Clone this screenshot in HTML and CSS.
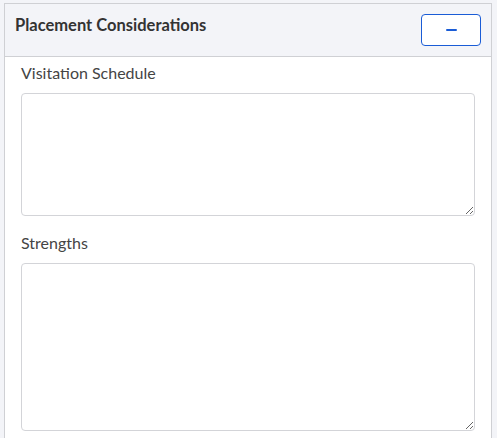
FILE: index.html
```html
<!DOCTYPE html>
<html>
<head>
<meta charset="utf-8">
<link rel="stylesheet" href="styles.css">
</head>
<body>
<div class="card">
  <div class="card-header">
    <h2 class="title">Placement Considerations</h2>
    <button class="toggle" type="button" aria-label="Collapse"><span class="minus"></span></button>
  </div>
  <div class="card-body">
    <div class="field">
      <label class="label" for="visit">Visitation Schedule</label>
      <textarea id="visit" class="input short"></textarea>
    </div>
    <div class="field">
      <label class="label" for="str">Strengths</label>
      <textarea id="str" class="input tall"></textarea>
    </div>
  </div>
</div>
</body>
</html>
```

FILE: styles.css
```css
html, body {
  margin: 0;
  background: #f3f4f8;
}
body {
  padding: 3px 0 0 4px;
  font-family: Lato, "Liberation Sans", sans-serif;
  color: #333;
}
.card {
  width: 488px;
  box-sizing: border-box;
  border: 1px solid #cfd0d4;
  background: #fff;
  height: 460px;
}
.card-header {
  display: flex;
  justify-content: space-between;
  align-items: flex-start;
  padding: 10px 10px 10px 10px;
  height: 53px;
  box-sizing: border-box;
  background: #f3f4f8;
  border-bottom: 1px solid #cfd0d4;
}
.title {
  margin: 2px 0 0 0;
  font-size: 16.5px;
  line-height: 19px;
  font-weight: 700;
  color: #333;
}
.toggle {
  width: 60px;
  height: 32px;
  box-sizing: border-box;
  border: 1px solid #1a5cd6;
  border-radius: 4px;
  background: #fff;
  display: flex;
  align-items: center;
  justify-content: center;
  padding: 0;
  margin: 0;
}
.minus {
  display: block;
  width: 11px;
  height: 2px;
  background: #1a5cd6;
  border-radius: 1px;
}
.card-body {
  padding: 6px 16px 0 16px;
}
.field + .field {
  margin-top: 17px;
}
.label {
  display: block;
  font-size: 16px;
  line-height: 19px;
  color: #444;
  margin-bottom: 11px;
}
.input {
  display: block;
  width: 100%;
  box-sizing: border-box;
  border: 1px solid #d3d4d8;
  border-radius: 4px;
  background: #fff;
  margin: 0;
  padding: 6px 8px;
  font-family: inherit;
}
.short { height: 123px; }
.tall { height: 168px; }
```
